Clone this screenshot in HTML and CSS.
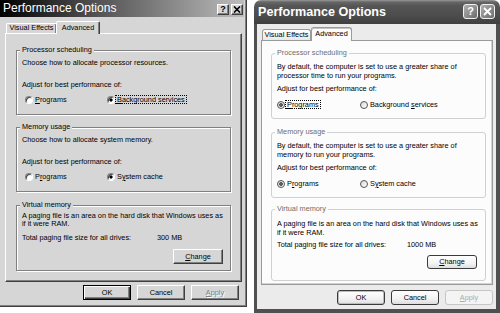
FILE: index.html
```html
<!DOCTYPE html>
<html>
<head>
<meta charset="utf-8">
<title>Performance Options</title>
<link rel="stylesheet" href="styles.css">
</head>
<body>
<div class="desk">
  <div class="w2">
    <div class="w2-title">
      <span class="w2-title-text">Performance Options</span>
      <div class="w2-caps">
        <span class="w2-cap">?</span>
        <span class="w2-cap"><svg width="8" height="7" viewBox="0 0 8 7"><path d="M1 0.5 L7 6.5 M7 0.5 L1 6.5" stroke="#000" stroke-width="1.6" fill="none"/></svg></span>
      </div>
    </div>
    <div class="w2-tabs">
      <div class="w2-tab">Visual Effects</div>
      <div class="w2-tab w2-tab-sel">Advanced</div>
    </div>
    <div class="w2-panel">
      <div class="w2-group">
        <div class="w2-legend">Processor scheduling</div>
        <div class="w2-text">Choose how to allocate processor resources.</div>
        <div class="w2-adjust">Adjust for best performance of:</div>
        <div class="w2-radios">
          <div class="w2-opt"><span class="w2-radio"></span><span class="w2-lbl"><u>P</u>rograms</span></div>
          <div class="w2-opt"><span class="w2-radio w2-on"></span><span class="w2-lbl w2-focus"><u>B</u>ackground services</span></div>
        </div>
      </div>
      <div class="w2-group">
        <div class="w2-legend">Memory usage</div>
        <div class="w2-text">Choose how to allocate system memory.</div>
        <div class="w2-adjust">Adjust for best performance of:</div>
        <div class="w2-radios">
          <div class="w2-opt"><span class="w2-radio"></span><span class="w2-lbl">P<u>r</u>ograms</span></div>
          <div class="w2-opt"><span class="w2-radio w2-on"></span><span class="w2-lbl">S<u>y</u>stem cache</span></div>
        </div>
      </div>
      <div class="w2-group w2-vm">
        <div class="w2-legend">Virtual memory</div>
        <div class="w2-desc">A paging file is an area on the hard disk that Windows uses as<br>if it were RAM.</div>
        <div class="w2-total"><span class="w2-total-lbl">Total paging file size for all drives:</span><span>300 MB</span></div>
        <div class="w2-change-row"><span class="w2-btn w2-change"><u>C</u>hange</span></div>
      </div>
    </div>
    <div class="w2-btns">
      <span class="w2-btn w2-btn-def">OK</span>
      <span class="w2-btn">Cancel</span>
      <span class="w2-btn w2-btn-dis"><u>A</u>pply</span>
    </div>
  </div>

  <div class="xp">
    <div class="xp-title">
      <span class="xp-title-text">Performance Options</span>
      <div class="xp-caps">
        <span class="xp-cap">?</span>
        <span class="xp-cap"><svg width="9" height="9" viewBox="0 0 9 9"><path d="M1 1 L8 8 M8 1 L1 8" stroke="#fff" stroke-width="1.8" fill="none"/></svg></span>
      </div>
    </div>
    <div class="xp-frame">
      <div class="xp-tabs">
        <div class="xp-tab">Visual Effects</div>
        <div class="xp-tab xp-tab-sel">Advanced</div>
      </div>
      <div class="xp-panel">
        <div class="xp-group">
          <div class="xp-legend">Processor scheduling</div>
          <div class="xp-desc">By default, the computer is set to use a greater share of<br>processor time to run your programs.</div>
          <div class="xp-adjust">Adjust for best performance of:</div>
          <div class="xp-radios">
            <div class="xp-opt"><span class="xp-radio xp-on"></span><span class="xp-lbl xp-focus"><u>P</u>rograms</span></div>
            <div class="xp-opt"><span class="xp-radio"></span><span class="xp-lbl">Background <u>s</u>ervices</span></div>
          </div>
        </div>
        <div class="xp-group">
          <div class="xp-legend">Memory usage</div>
          <div class="xp-desc">By default, the computer is set to use a greater share of<br>memory to run your programs.</div>
          <div class="xp-adjust">Adjust for best performance of:</div>
          <div class="xp-radios">
            <div class="xp-opt"><span class="xp-radio xp-on"></span><span class="xp-lbl">P<u>r</u>ograms</span></div>
            <div class="xp-opt"><span class="xp-radio"></span><span class="xp-lbl">S<u>y</u>stem cache</span></div>
          </div>
        </div>
        <div class="xp-group xp-vm">
          <div class="xp-legend">Virtual memory</div>
          <div class="xp-desc">A paging file is an area on the hard disk that Windows uses as<br>if it were RAM.</div>
          <div class="xp-total"><span class="xp-total-lbl">Total paging file size for all drives:</span><span>1000 MB</span></div>
          <div class="xp-change-row"><span class="xp-btn xp-change"><u>C</u>hange</span></div>
        </div>
      </div>
      <div class="xp-btns">
        <span class="xp-btn xp-btn-def">OK</span>
        <span class="xp-btn">Cancel</span>
        <span class="xp-btn xp-btn-dis"><u>A</u>pply</span>
      </div>
    </div>
  </div>
</div>
</body>
</html>
```
FILE: styles.css
```css
* { box-sizing: border-box; }
html, body { margin: 0; padding: 0; background: #fff; }
body {
  font-family: "Liberation Sans", Arial, sans-serif;
  font-size: 7.3px;
  line-height: 8px;
  color: #000;
}
u { text-decoration: underline; text-underline-offset: 1px; text-decoration-thickness: 1px; }
.desk { display: flex; gap: 7px; width: 500px; height: 313px; overflow: hidden; }

/* ---------- Windows 2000 dialog ---------- */
.w2 {
  flex: none;
  width: 247px;
  height: 307px;
  background: #d6d6d6;
  border-right: 1px solid #404040;
  border-bottom: 1px solid #404040;
  box-shadow: inset -1px -1px 0 #808080;
  padding-right: 2px;
  display: flex;
  flex-direction: column;
  white-space: nowrap;
}
.w2-title {
  height: 17px;
  display: flex;
  justify-content: space-between;
  padding: 0 1px 0 3px;
  background: linear-gradient(90deg, #000 0%, #4a4a4a 35%, #bdbdbd 100%);
}
.w2-title-text { color: #fff; font-size: 12px; line-height: 17px; }
.w2-caps { display: flex; gap: 2px; margin-top: 4px; }
.w2-cap {
  width: 12px; height: 11px;
  background: #d6d6d6;
  border: 1px solid;
  border-color: #fff #404040 #404040 #fff;
  box-shadow: inset -1px -1px 0 #808080;
  display: flex; align-items: center; justify-content: center;
  font-weight: bold; font-size: 9px; line-height: 9px;
}
.w2-tabs { display: flex; align-items: flex-end; height: 12px; margin-top: 4px; padding-left: 6px; }
.w2-tab {
  width: 51px; height: 10px;
  border: 1px solid; border-bottom: 0;
  border-color: #fff #404040 transparent #fff;
  box-shadow: inset -1px 0 0 #808080;
  border-radius: 2px 2px 0 0;
  text-align: center; line-height: 8px;
}
.w2-tab-sel {
  position: relative; z-index: 1;
  width: 44px; height: 13px;
  margin-left: -1px; margin-bottom: -1px;
  background: #d6d6d6;
  line-height: 11px;
}
.w2-panel {
  margin: 0 2px 0 5px;
  height: 249px;
  border: 1px solid;
  border-color: #fff #404040 #404040 #fff;
  box-shadow: inset -1px -1px 0 #808080;
  padding: 16px 10px 0;
}
.w2-group {
  border: 1px solid #808080;
  box-shadow: inset 1px 1px 0 #fff, 1px 1px 0 #fff;
  padding: 0 7px 10px 5px;
}
.w2-group + .w2-group { margin-top: 12px; }
.w2-legend { width: max-content; margin: -5px 0 0 -2px; padding: 0 2px; background: #d6d6d6; }
.w2-text { margin-top: 5px; }
.w2-adjust { margin-top: 14px; }
.w2-radios { display: grid; grid-template-columns: 82px auto; margin-top: 6px; padding-left: 3px; height: 9px; align-items: center; }
.w2-opt { display: flex; align-items: center; }
.w2-radio {
  width: 8px; height: 8px; border-radius: 50%;
  border: 1px solid; border-color: #808080 #fff #fff #808080;
  box-shadow: inset 1px 1px 0 #404040;
  background: #fff;
}
.w2-on { background: radial-gradient(circle, #000 0 1.3px, transparent 1.9px), #fff; }
.w2-lbl { padding: 0 1px; border: 1px dotted transparent; line-height: 7px; }
.w2-focus { border-color: #000; }
.w2-group.w2-vm { margin-top: 13px; padding-bottom: 6px; }
.w2-desc { margin-top: 3px; }
.w2-total { display: flex; margin-top: 6px; }
.w2-total-lbl { width: 135px; }
.w2-change-row { display: flex; justify-content: flex-end; margin-top: 7px; }
.w2-btn {
  width: 48px; height: 15px;
  border: 1px solid; border-color: #fff #404040 #404040 #fff;
  box-shadow: inset -1px -1px 0 #808080;
  background: #d6d6d6;
  display: flex; align-items: center; justify-content: center;
}
.w2-change { width: 50px; }
.w2-btn-def {
  border-color: #000;
  box-shadow: inset 1px 1px 0 #fff, inset -1px -1px 0 #404040, inset -2px -2px 0 #808080;
}
.w2-btn-dis { color: #808080; text-shadow: 1px 1px 0 #fff; }
.w2-btns { display: flex; justify-content: flex-end; gap: 6px; margin-top: 3px; padding-right: 5px; }

/* ---------- Windows XP dialog ---------- */
.xp {
  flex: none;
  width: 246px;
  height: 313px;
  display: flex;
  flex-direction: column;
  border-radius: 7px 7px 0 0;
  overflow: hidden;
  white-space: nowrap;
}
.xp-title {
  height: 24px;
  flex: none;
  display: flex;
  justify-content: space-between;
  padding: 0 5px 0 4px;
  background: linear-gradient(#9a9a9a 0, #676767 2px, #555 6px, #4c4c4c 16px, #3f3f3f 24px);
}
.xp-title-text { color: #fff; font-weight: bold; font-size: 12.6px; line-height: 24px; }
.xp-caps { display: flex; gap: 2px; margin-top: 4px; }
.xp-cap {
  width: 15px; height: 15px;
  border: 1px solid #f2f2f2;
  border-radius: 3px;
  background: linear-gradient(135deg, #b0b0b0, #6c6c6c);
  color: #fff;
  display: flex; align-items: center; justify-content: center;
  font-weight: bold; font-size: 11px; line-height: 11px;
}
.xp-frame {
  flex: 1;
  background: #ebebeb;
  border: solid #505050;
  border-width: 0 4px 4px 3px;
  display: flex;
  flex-direction: column;
}
.xp-tabs { display: flex; align-items: flex-end; height: 13px; margin-top: 3px; padding-left: 5px; }
.xp-tab {
  width: 49px; height: 11px;
  border: 1px solid #9a9a9a; border-bottom: 0;
  border-radius: 3px 3px 0 0;
  background: linear-gradient(#fff, #e9e9e9);
  text-align: center; line-height: 9px;
}
.xp-tab-sel {
  position: relative; z-index: 1;
  width: 41px; height: 14px;
  margin-bottom: -1px;
  background: #fcfcfc;
  box-shadow: inset 0 1px 0 #c4c4c4;
  line-height: 11px;
}
.xp-panel {
  margin: 0 3px 0 4px;
  height: 245px;
  background: #fcfcfc;
  border: 1px solid #9a9a9a;
  box-shadow: inset -1px -1px 0 #d2d2d2;
  padding: 12px 6px 0 9px;
}
.xp-group { border: 1px solid #d0d0d0; border-radius: 3px; padding: 0 8px 9px 5px; }
.xp-group + .xp-group { margin-top: 13px; }
.xp-legend { width: max-content; margin: -5px 0 0 -2px; padding: 0 2px; background: #fcfcfc; color: #6e6e6e; }
.xp-desc { margin-top: 6px; line-height: 8.5px; }
.xp-adjust { margin-top: 5px; line-height: 8.5px; }
.xp-radios { display: grid; grid-template-columns: 83px auto; margin-top: 6.5px; height: 9px; align-items: center; }
.xp-opt { display: flex; align-items: center; }
.xp-radio {
  width: 8px; height: 8px; border-radius: 50%;
  border: 1px solid #555;
  background: linear-gradient(135deg, #d8d8d8, #fff);
}
.xp-on { background: radial-gradient(circle, #5e5e5e 0 1.6px, transparent 2.2px), linear-gradient(135deg, #d8d8d8, #fff); }
.xp-lbl { padding: 0 1px; border: 1px dotted transparent; line-height: 7px; }
.xp-focus { border-color: #000; }
.xp-group.xp-vm { margin-top: 11px; padding-bottom: 11px; }
.xp-vm .xp-desc { margin-top: 7px; }
.xp-total { display: flex; margin-top: 4px; line-height: 8.5px; }
.xp-total-lbl { width: 130px; }
.xp-change-row { display: flex; justify-content: flex-end; margin-top: 5.5px; }
.xp-btn {
  width: 48px; height: 15px;
  border: 1px solid #3a3a3a;
  border-radius: 3px;
  background: linear-gradient(#fff, #f3f3f3 60%, #dedede);
  display: flex; align-items: center; justify-content: center;
}
.xp-change { width: 50px; height: 14px; }
.xp-btn-def { box-shadow: inset 0 0 0 1px #bdbdbd; }
.xp-btn-dis { border-color: #c6c6c6; background: #f4f4f4; color: #acacac; }
.xp-btns { display: flex; justify-content: flex-end; gap: 6px; margin-top: 5px; padding-right: 3px; }
```
